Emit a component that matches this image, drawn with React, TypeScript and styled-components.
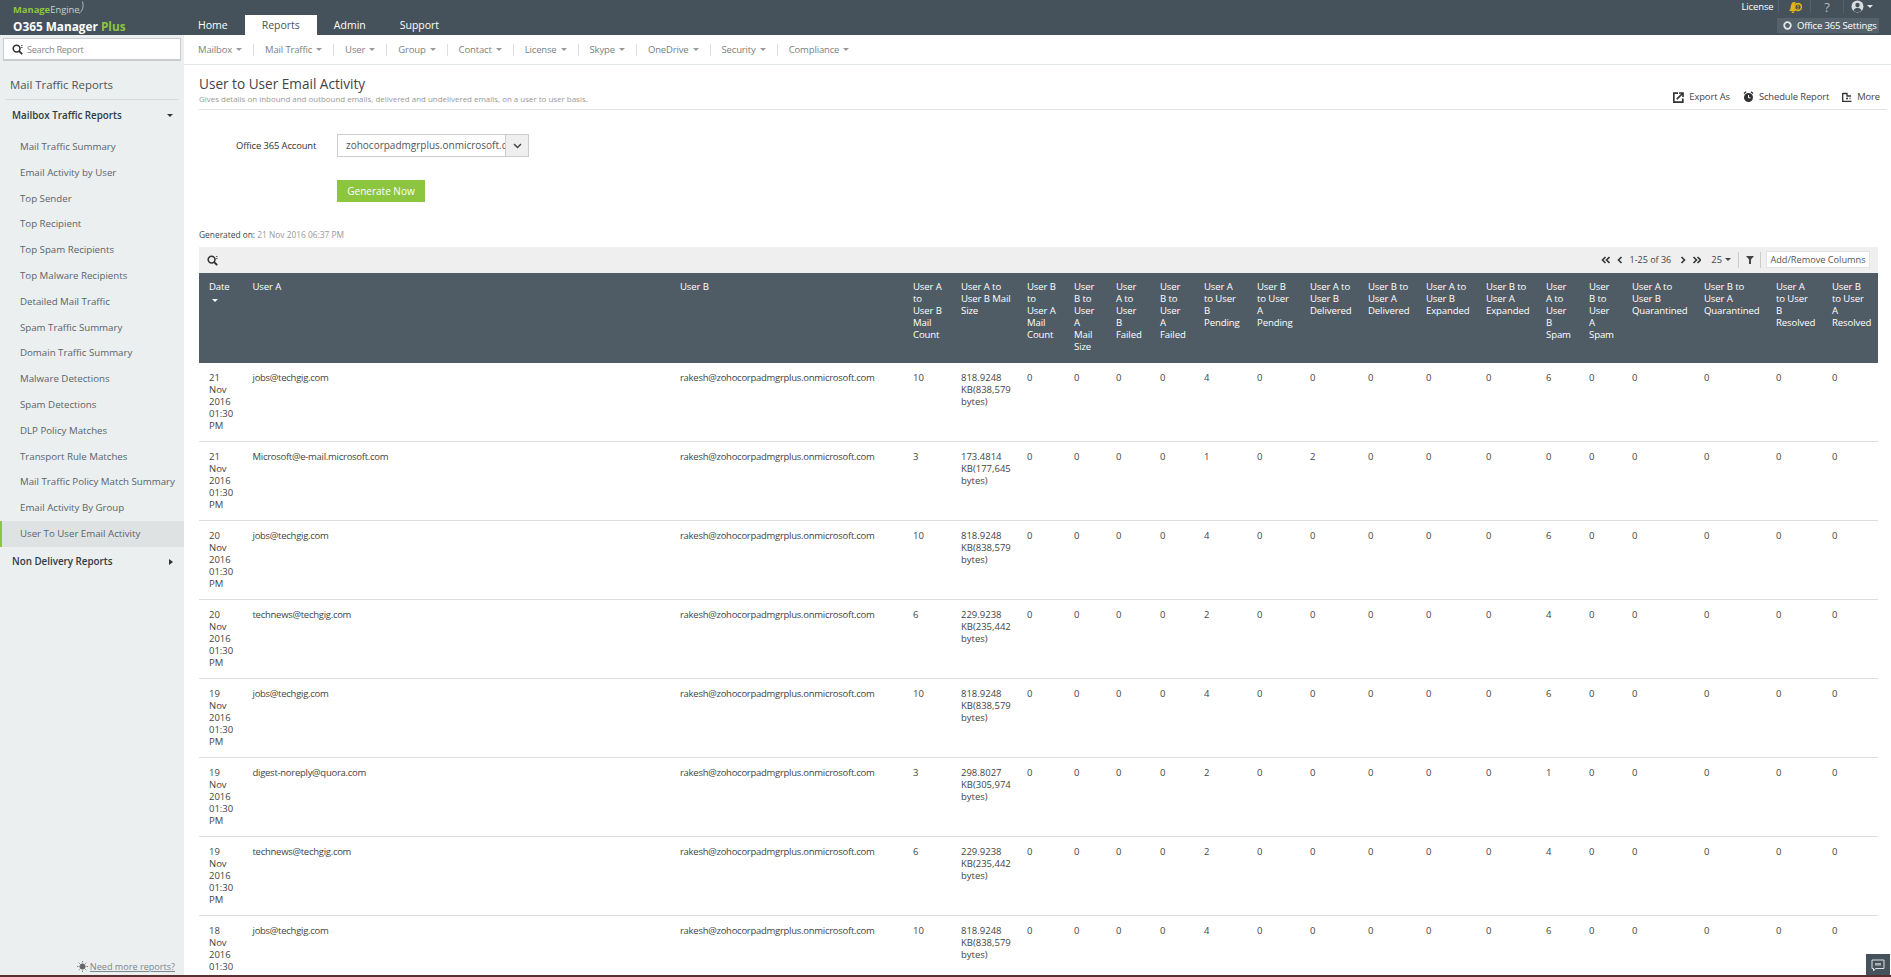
import React from "react";
import styled, { createGlobalStyle } from "styled-components";

const Global = createGlobalStyle`
  html, body { margin: 0; padding: 0; height: 977px; overflow: hidden; background: #fff; }
  body { font-family: "Open Sans", "Liberation Sans", sans-serif; font-size: 10px; color: #444; }
  * { box-sizing: border-box; }
`;

const Page = styled.div`
  width: 1891px; height: 977px; display: flex; flex-direction: column; overflow: hidden; position: relative;
`;
const TopBar = styled.header`
  height: 35px; flex: none; background: #46525b; display: flex; position: relative;
`;
const Brand = styled.div`
  width: 181px; flex: none; padding: 4px 0 0 13px; color: #fff; display: flex; flex-direction: column;
`;
const BrandTop = styled.div`
  font-size: 9.4px; line-height: 12px; color: #c8d0d4; display: flex; align-items: flex-start;
  b { color: #8cc63f; font-weight: 700; }
  svg { margin: -3px 0 0 -3px; }
`;
const BrandName = styled.div`
  font-size: 11.8px; line-height: 16px; font-weight: 700; color: #fff; margin-top: 2px;
  span { color: #8cc63f; }
`;
const Tabs = styled.nav`
  display: flex; align-items: flex-end; height: 35px;
`;
const Tab = styled.div<{ $active?: boolean }>`
  height: 20px; line-height: 20px; padding: 0 17px; font-size: 10.5px;
  color: ${p => (p.$active ? "#4a555c" : "#fff")};
  background: ${p => (p.$active ? "#fff" : "transparent")};
`;
const TopRight = styled.div`
  position: absolute; right: 0; top: 0; width: 300px; height: 35px; color: #fff;
`;
const TopLinks = styled.div`
  position: absolute; top: 0; right: 11px; height: 13px; display: flex; align-items: center; font-size: 9.5px; letter-spacing: -0.1px;
`;
const TopLink = styled.div<{ $w: number }>`
  width: ${p => p.$w}px; height: 13px; display: flex; align-items: center; justify-content: center;
  border-right: 1px solid #56626a;
  &:last-child { border-right: 0; }
`;
const Help = styled.span`
  font-size: 13px; color: #b4bbc0;
`;
const SettingsPill = styled.div`
  position: absolute; top: 18px; right: 12px; width: 102px; height: 15px; background: #56626b;
  display: flex; align-items: center; gap: 5px; padding-left: 6px; font-size: 9.6px; letter-spacing: -0.2px; white-space: nowrap;
  svg { flex: none; }
`;
const Body = styled.div`
  flex: 1; display: flex; min-height: 0;
`;
const Sidebar = styled.aside`
  width: 184px; flex: none; background: #ebeff0; position: relative; padding-top: 3px;
`;
const SearchBox = styled.div`
  height: 23px; margin: 0 3px; background: #fff; border: 1px solid #c9cdcf; border-bottom-width: 2px;
  display: flex; align-items: center; gap: 4px; padding-left: 8px; color: #888; font-size: 9.2px; letter-spacing: -0.3px;
`;
const SideTitle = styled.div`
  margin: 0 6px; padding: 16px 4px 0; height: 39px; line-height: 16px; font-size: 11.4px; color: #4a555c;
  border-bottom: 1px solid #d5dadc;
`;
const Group = styled.div`
  height: 30px; padding: 0 11px 0 12px; display: flex; align-items: center; justify-content: space-between;
  font-size: 9.8px; font-weight: 600; color: #2f3a42;
`;
const SideList = styled.div`
  padding-top: 4px;
`;
const SideItem = styled.div<{ $active?: boolean }>`
  height: 25.8px; line-height: 25px; padding-left: ${p => (p.$active ? 18 : 20)}px; font-size: 9.7px; color: #5a646b;
  border-left: ${p => (p.$active ? "2px solid #8cc63f" : "0")};
  background: ${p => (p.$active ? "#dfe2e3" : "transparent")};
`;
const MoreLink = styled.div`
  position: absolute; right: 9px; bottom: 4px; display: flex; align-items: center; gap: 2px; font-size: 9.1px; color: #7b868d;
  span { text-decoration: underline; }
`;
const Main = styled.main`
  flex: 1; min-width: 0; overflow: hidden;
`;
const SubNav = styled.nav`
  height: 30px; display: flex; align-items: center; padding-left: 14px; border-bottom: 1px solid #e1e6e7;
`;
const SubItem = styled.div`
  display: flex; align-items: center; gap: 4px; font-size: 9.5px; letter-spacing: -0.15px; color: #7a7f83; height: 12px;
  padding-right: 11px; margin-right: 11px; border-right: 1px solid #dcdfe0; white-space: nowrap;
  &:last-child { border-right: 0; }
`;
const Caret = styled.i<{ $c?: string; $s?: number; $ml?: number }>`
  display: inline-block; width: 0; height: 0; flex: none; margin-left: ${p => p.$ml ?? 0}px;
  border-left: ${p => p.$s ?? 3}px solid transparent; border-right: ${p => p.$s ?? 3}px solid transparent;
  border-top: ${p => p.$s ?? 3}px solid ${p => p.$c ?? "#888"};
`;
const CaretRight = styled.i`
  display: inline-block; width: 0; height: 0;
  border-top: 3px solid transparent; border-bottom: 3px solid transparent; border-left: 4px solid #333;
`;
const Content = styled.div`
  padding: 0 4px 0 15px;
`;
const HeadBlock = styled.div`
  height: 45px; border-bottom: 1px solid #e1e4e5; position: relative; padding-top: 10px;
`;
const Title = styled.h1`
  margin: 0; font-size: 13.6px; line-height: 18px; font-weight: 400; color: #444;
`;
const Desc = styled.div`
  font-size: 7.95px; line-height: 11px; color: #999; margin-top: 1px;
`;
const Actions = styled.div`
  position: absolute; right: 7px; top: 26px; display: flex; gap: 13px; font-size: 9.4px; letter-spacing: -0.1px; color: #444;
`;
const Action = styled.div`
  display: flex; align-items: center; gap: 5px; line-height: 12px;
`;
const FormRow = styled.div`
  display: flex; align-items: center; margin-top: 24px; height: 23px;
`;
const Label = styled.div`
  width: 138px; padding-left: 37px; font-size: 9.4px; letter-spacing: -0.1px; color: #333; white-space: nowrap;
`;
const Select = styled.div`
  width: 192px; height: 23px; border: 1px solid #ccc; display: flex; font-size: 10px; color: #555;
`;
const SelectText = styled.div`
  flex: 1; min-width: 0; overflow: hidden; white-space: nowrap; padding-left: 8px; line-height: 21px;
`;
const SelectArrow = styled.div`
  width: 23px; flex: none; background: #efefef; border-left: 1px solid #ccc; display: flex; align-items: center; justify-content: center;
`;
const Generate = styled.button`
  display: block; margin: 23px 0 0 138px; width: 88px; height: 22px; border: 0; background: #8cc63f; color: #fff;
  font-family: inherit; font-size: 10px; padding: 0;
`;
const GeneratedOn = styled.div`
  margin-top: 27px; height: 12px; line-height: 12px; font-size: 8.4px; color: #999;
  b { color: #444; font-weight: 400; }
`;
const Toolbar = styled.div`
  margin-top: 6px; width: 1679px; height: 26px; background: #efefef; display: flex; align-items: center; padding-left: 8px; position: relative;
`;
const Pager = styled.div`
  position: absolute; right: 8px; top: 4px; height: 17px; display: flex; align-items: center; font-size: 9.4px; color: #444;
`;
const PagerGlyph = styled.span<{ $ml: number }>`
  margin-left: ${p => p.$ml}px; display: inline-flex; align-items: center; gap: 3px;
`;
const PagerText = styled.span`
  margin-left: 7px; font-size: 9px; white-space: nowrap;
`;
const Sep = styled.span<{ $ml: number }>`
  width: 1px; height: 16px; background: #ccc; margin-left: ${p => p.$ml}px;
`;
const ColumnsBtn = styled.div`
  margin-left: 5px; width: 104px; height: 17px; line-height: 16px; background: #fff; border: 1px solid #e3e3e3; text-align: center; font-size: 9.2px; color: #555; white-space: nowrap;
`;
const Table = styled.table`
  width: 1679px; table-layout: fixed; border-collapse: separate; border-spacing: 0;
`;
const Th = styled.th`
  height: 90px; background: #505c65; color: #fff; font-weight: 400; font-size: 9.6px; letter-spacing: -0.12px; line-height: 12px;
  text-align: left; vertical-align: top; padding: 8px 0 0 10px; white-space: pre-line;
`;
const Td = styled.td`
  height: 79px; vertical-align: top; padding: 9px 0 0 10px; font-size: 9.5px; letter-spacing: -0.27px; line-height: 12px; color: #444; white-space: pre-line;
  border-bottom: 1px solid #dfdfdf;
`;
const NumTd = styled(Td)`
  letter-spacing: 0;
`;

const Loupe = ({ c = "#333" }: { c?: string }) => (
  <svg width="11" height="11" viewBox="0 0 11 11" fill="none" stroke={c}>
    <circle cx="4.6" cy="4.6" r="3.4" strokeWidth="1.6" />
    <path d="M7 7l3.2 3.2" strokeWidth="1.8" />
    <path d="M9 1.5h1.5M9 3.5h1.5" strokeWidth="0.8" />
  </svg>
);
const LogoArc = () => (
  <svg width="8" height="13" viewBox="0 0 8 13" fill="none" stroke="#c8d0d4" strokeWidth=".8"><path d="M2 12.500C5.500 10 7 6 5.500 .5" /></svg>
);
const Bell = () => (
  <svg width="14" height="12" viewBox="0 0 14 12" fill="#e3b51b">
    <path d="M1 10c1-1 1.500-2 1.700-4C3 3 4 1 6 1c.8 0 1.400.3 2 .8C6.500 3 6 4.500 6 6c0 1.500.8 3 2 4H1z" />
    <path d="M3.500 10.500h3c-.2 1-.8 1.500-1.500 1.500s-1.300-.5-1.500-1.500z" />
    <circle cx="10" cy="6" r="3.400" fill="none" stroke="#e3b51b" strokeWidth="1.600" />
    <rect x="9.500" y="4" width="1" height="2.500" /><rect x="9.500" y="7" width="1" height="1" />
  </svg>
);
const UserCircle = () => (
  <svg width="13" height="13" viewBox="0 0 13 13">
    <circle cx="6.500" cy="6.500" r="6" fill="#d8dde0" />
    <circle cx="6.500" cy="5" r="2.200" fill="#46525b" />
    <path d="M2.500 10.500c.8-2 2.300-2.800 4-2.800s3.200.8 4 2.800c-1 1-2.500 1.500-4 1.500s-3-.5-4-1.500z" fill="#46525b" />
  </svg>
);
const Gear = () => (
  <svg width="9" height="9" viewBox="0 0 9 9"><circle cx="4.500" cy="4.500" r="3.300" fill="none" stroke="#e4e7e9" strokeWidth="1.800" /></svg>
);
const ExportIcon = () => (
  <svg width="11" height="11" viewBox="0 0 11 11" fill="none" stroke="#333">
    <path d="M5 1.200H.8v9h9V6.500" strokeWidth="1.700" />
    <path d="M3.800 7.200L9.500 1.500M6 1h4v4" strokeWidth="1.700" />
  </svg>
);
const ClockIcon = () => (
  <svg width="11" height="12" viewBox="0 0 11 12">
    <circle cx="5.500" cy="6.500" r="4.500" fill="#333" />
    <path d="M1 2.500L3 .8M10 2.500L8 .8" stroke="#333" strokeWidth="1.400" />
    <path d="M5.500 4v2.800H7.500" stroke="#fff" fill="none" />
  </svg>
);
const MoreIcon = () => (
  <svg width="10" height="10" viewBox="0 0 10 10" fill="none" stroke="#333" strokeWidth="1.300">
    <path d="M.7 1v8.300H9.500" /><path d="M1 1.500h4v2.500h4" /><path d="M4 6.500h2M7.500 6.500h1" />
  </svg>
);
const Chevron = () => (
  <svg width="9" height="6" viewBox="0 0 9 6" fill="none" stroke="#444" strokeWidth="1.500"><path d="M1 1l3.500 3.500L8 1" /></svg>
);
const Funnel = () => (
  <svg width="8" height="9" viewBox="0 0 8 9" fill="#444"><path d="M0 1h8L5 4.500V9H3V4.500z" /></svg>
);
const Arrows = ({ d, n }: { d: "l" | "r"; n: 1 | 2 }) => (
  <svg width={n === 2 ? 9 : 6} height="8" viewBox={`0 0 ${n === 2 ? 9 : 6} 8`} fill="none" stroke="#333" strokeWidth="1.600">
    {d === "l" ? <path d="M4.500 1L1.500 4l3 3" /> : <path d="M1.500 1l3 3-3 3" />}
    {n === 2 && (d === "l" ? <path d="M8.500 1L5.500 4l3 3" /> : <path d="M5.500 1l3 3-3 3" />)}
  </svg>
);
const Sun = () => (
  <svg width="11" height="11" viewBox="0 0 11 11" stroke="#666" fill="#666">
    <circle cx="5.500" cy="5.500" r="2.600" />
    <path d="M5.500 0v1.500M5.500 9.500V11M0 5.500h1.500M9.500 5.500H11M1.700 1.700l1 1M8.300 8.300l1 1M1.700 9.300l1-1M8.300 2.700l1-1" strokeWidth=".8" />
  </svg>
);
const Chat = () => (
  <svg width="14" height="13" viewBox="0 0 14 13" fill="none" stroke="#dfe3e5">
    <path d="M1 1h12v8.500H4.500L2.500 12V9.500H1z" />
    <path d="M4 4h6v2.500H4z" fill="#aab2b7" stroke="none" />
  </svg>
);

const ChatButton = styled.div`
  position: absolute; right: 1px; bottom: 2px; width: 24px; height: 21px; background: #46525b;
  display: flex; align-items: center; justify-content: center; padding-top: 2px;
`;
const BottomLine = styled.div`
  position: absolute; left: 0; right: 0; bottom: 0; height: 2px; background: #5a2f2f;
`;

const subNav = ["Mailbox", "Mail Traffic", "User", "Group", "Contact", "License", "Skype", "OneDrive", "Security", "Compliance"];
const sideItems = ["Mail Traffic Summary", "Email Activity by User", "Top Sender", "Top Recipient", "Top Spam Recipients", "Top Malware Recipients", "Detailed Mail Traffic", "Spam Traffic Summary", "Domain Traffic Summary", "Malware Detections", "Spam Detections", "DLP Policy Matches", "Transport Rule Matches", "Mail Traffic Policy Match Summary", "Email Activity By Group", "User To User Email Activity"];
const cols: [string, number][] = [
  ["Date", 43.5], ["User A", 427.5], ["User B", 233],
  ["User A\nto\nUser B\nMail\nCount", 48], ["User A to\nUser B Mail\nSize", 66], ["User B\nto\nUser A\nMail\nCount", 47],
  ["User\nB to\nUser\nA\nMail\nSize", 42], ["User\nA to\nUser\nB\nFailed", 44], ["User\nB to\nUser\nA\nFailed", 44],
  ["User A\nto User\nB\nPending", 53], ["User B\nto User\nA\nPending", 53], ["User A to\nUser B\nDelivered", 58], ["User B to\nUser A\nDelivered", 58],
  ["User A to\nUser B\nExpanded", 60], ["User B to\nUser A\nExpanded", 60], ["User\nA to\nUser\nB\nSpam", 43], ["User\nB to\nUser\nA\nSpam", 43],
  ["User A to\nUser B\nQuarantined", 72], ["User B to\nUser A\nQuarantined", 72], ["User A\nto User\nB\nResolved", 56], ["User B\nto User\nA\nResolved", 56],
];
const jobs = "jobs@techgig.com", news = "technews@techgig.com";
const s1 = "818.9248\nKB(838,579\nbytes)", s2 = "229.9238\nKB(235,442\nbytes)";
const rows: { d: string; a: string; n: string; s: string; p: string; dl: string; sp: string }[] = [
  { d: "21", a: jobs, n: "10", s: s1, p: "4", dl: "0", sp: "6" },
  { d: "21", a: "Microsoft@e-mail.microsoft.com", n: "3", s: "173.4814\nKB(177,645\nbytes)", p: "1", dl: "2", sp: "0" },
  { d: "20", a: jobs, n: "10", s: s1, p: "4", dl: "0", sp: "6" },
  { d: "20", a: news, n: "6", s: s2, p: "2", dl: "0", sp: "4" },
  { d: "19", a: jobs, n: "10", s: s1, p: "4", dl: "0", sp: "6" },
  { d: "19", a: "digest-noreply@quora.com", n: "3", s: "298.8027\nKB(305,974\nbytes)", p: "2", dl: "0", sp: "1" },
  { d: "19", a: news, n: "6", s: s2, p: "2", dl: "0", sp: "4" },
  { d: "18", a: jobs, n: "10", s: s1, p: "4", dl: "0", sp: "6" },
];

export default function App() {
  return (
    <Page>
      <Global />
      <TopBar>
        <Brand>
          <BrandTop><span><b>Manage</b>Engine</span><LogoArc /></BrandTop>
          <BrandName>O365 Manager <span>Plus</span></BrandName>
        </Brand>
        <Tabs>
          <Tab>Home</Tab>
          <Tab $active>Reports</Tab>
          <Tab>Admin</Tab>
          <Tab>Support</Tab>
        </Tabs>
        <TopRight>
          <TopLinks>
            <TopLink $w={42}>License</TopLink>
            <TopLink $w={32}><Bell /></TopLink>
            <TopLink $w={33}><Help>?</Help></TopLink>
            <TopLink $w={36}><UserCircle />&nbsp;<Caret $c="#e4e7e9" /></TopLink>
          </TopLinks>
          <SettingsPill><Gear />Office 365 Settings</SettingsPill>
        </TopRight>
      </TopBar>
      <Body>
        <Sidebar>
          <SearchBox><Loupe />Search Report</SearchBox>
          <SideTitle>Mail Traffic Reports</SideTitle>
          <Group>Mailbox Traffic Reports<Caret $c="#333" /></Group>
          <SideList>
            {sideItems.map((t, i) => <SideItem key={t} $active={i === sideItems.length - 1}>{t}</SideItem>)}
          </SideList>
          <Group>Non Delivery Reports<CaretRight /></Group>
          <MoreLink><Sun /><span>Need more reports?</span></MoreLink>
        </Sidebar>
        <Main>
          <SubNav>
            {subNav.map(t => <SubItem key={t}>{t}<Caret $c="#999" /></SubItem>)}
          </SubNav>
          <Content>
            <HeadBlock>
              <Title>User to User Email Activity</Title>
              <Desc>Gives details on inbound and outbound emails, delivered and undelivered emails, on a user to user basis.</Desc>
              <Actions>
                <Action><ExportIcon />Export As</Action>
                <Action><ClockIcon />Schedule Report</Action>
                <Action><MoreIcon />More</Action>
              </Actions>
            </HeadBlock>
            <FormRow>
              <Label>Office 365 Account</Label>
              <Select>
                <SelectText>zohocorpadmgrplus.onmicrosoft.com</SelectText>
                <SelectArrow><Chevron /></SelectArrow>
              </Select>
            </FormRow>
            <Generate>Generate Now</Generate>
            <GeneratedOn><b>Generated on:</b> 21 Nov 2016 06:37 PM</GeneratedOn>
            <Toolbar>
              <Loupe />
              <Pager>
                <Arrows d="l" n={2} />
                <PagerGlyph $ml={7}><Arrows d="l" n={1} /></PagerGlyph>
                <PagerText>1-25 of 36</PagerText>
                <PagerGlyph $ml={9}><Arrows d="r" n={1} /></PagerGlyph>
                <PagerGlyph $ml={6}><Arrows d="r" n={2} /></PagerGlyph>
                <PagerGlyph $ml={10}>25<Caret $c="#444" /></PagerGlyph>
                <Sep $ml={7} />
                <PagerGlyph $ml={7}><Funnel /></PagerGlyph>
                <Sep $ml={6} />
                <ColumnsBtn>Add/Remove Columns</ColumnsBtn>
              </Pager>
            </Toolbar>
            <Table>
              <colgroup>{cols.map(([, w], i) => <col key={i} style={{ width: w }} />)}</colgroup>
              <thead>
                <tr>
                  {cols.map(([t], i) => (
                    <Th key={i}>{t}{i === 0 && <><br /><Caret $c="#fff" $ml={3} /></>}</Th>
                  ))}
                </tr>
              </thead>
              <tbody>
                {rows.map((r, i) => (
                  <tr key={i}>
                    <NumTd>{`${r.d}\nNov\n2016\n01:30\nPM`}</NumTd>
                    <Td>{r.a}</Td>
                    <Td>rakesh@zohocorpadmgrplus.onmicrosoft.com</Td>
                    <NumTd>{r.n}</NumTd>
                    <NumTd>{r.s}</NumTd>
                    <NumTd>0</NumTd><NumTd>0</NumTd><NumTd>0</NumTd><NumTd>0</NumTd>
                    <NumTd>{r.p}</NumTd><NumTd>0</NumTd>
                    <NumTd>{r.dl}</NumTd><NumTd>0</NumTd><NumTd>0</NumTd><NumTd>0</NumTd>
                    <NumTd>{r.sp}</NumTd><NumTd>0</NumTd><NumTd>0</NumTd><NumTd>0</NumTd><NumTd>0</NumTd><NumTd>0</NumTd>
                  </tr>
                ))}
              </tbody>
            </Table>
          </Content>
        </Main>
      </Body>
      <BottomLine />
      <ChatButton><Chat /></ChatButton>
    </Page>
  );
}
